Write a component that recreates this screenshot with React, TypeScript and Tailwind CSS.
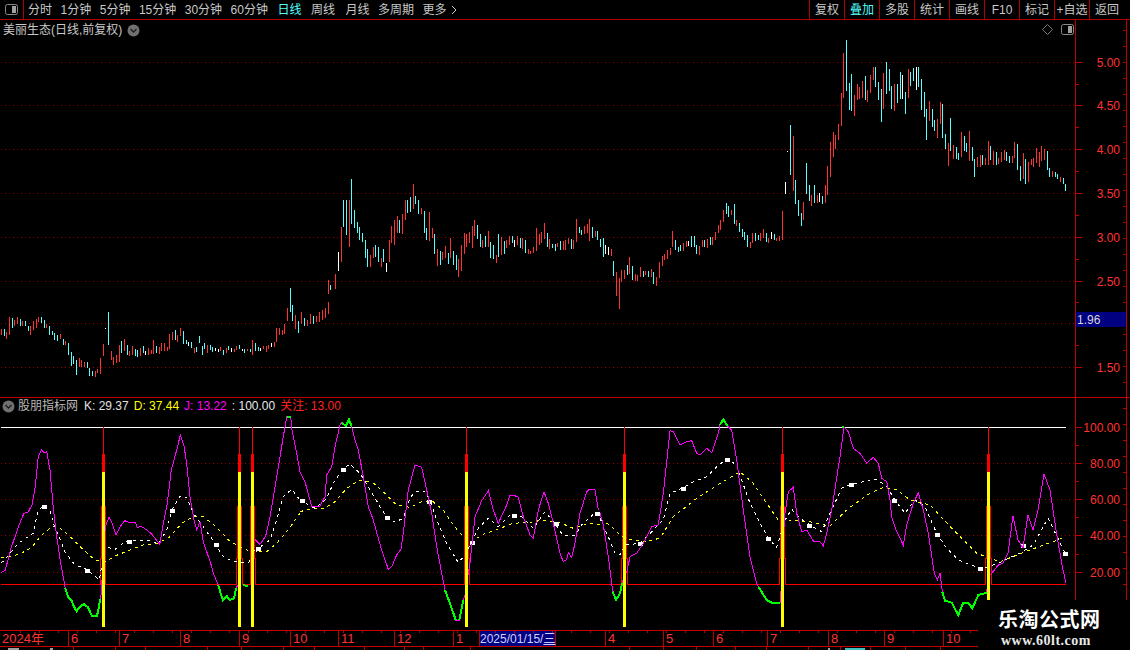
const RED_LINE = "#c00000";

// candles read off the chart: "x,top,bottom,colour", in 3x crop units
const candleGroups: [number, number, string][] = [
  [0, 270, "4,178,196,r 13,178,198,c 19,186,206,r 28,142,194,r 37,144,174,c 43,150,168,r 52,142,162,r 61,148,168,c 67,154,168,r 76,154,168,c 85,168,184,c 91,168,194,r 100,154,180,r 109,148,174,r 115,142,156,r 124,142,160,c 133,150,174,c 139,162,174,r 148,168,194,c 157,184,194,c 163,190,210,c 172,196,212,c 181,192,208,r 190,208,226,c 196,214,226,r 205,220,254,c 214,246,288,c 220,258,282,c 229,270,314,c 238,264,290,r 244,270,292,r 253,276,290,r 262,276,294,c 268,294,318,c 277,304,318,c 286,304,320,r 292,296,310,r 301,264,312,r 310,222,258,r 316,174,177,w 325,126,224,c 334,244,270,r 340,262,286,r 349,256,278,r 358,224,276,r 364,214,250,c 373,208,244,r 382,226,254,c 388,244,258,r 397,228,256,r 406,238,258,c 412,240,260,c 421,234,258,r 430,228,250,c 436,244,254,w 445,234,254,r 454,240,252,r 460,210,252,r 469,228,250,c 478,232,252,r 484,220,244,r 493,218,244,r 502,232,244,r 508,192,238,r 517,186,210,r 526,180,210,c 532,196,216,r 541,174,198,r 550,184,222,c 559,210,222,c 565,216,228,w 574,216,234,c 583,234,248,r 589,232,246,c 598,198,218,c 607,228,254,c 613,220,238,c 622,224,248,r 631,226,240,c 637,232,246,c 646,234,244,w 655,238,246,w 661,232,244,r 670,240,254,c 679,234,250,r 685,228,240,c 694,234,246,w 703,236,246,r 709,228,240,r 718,226,236,c 727,238,242,w 733,238,248,c 742,238,244,r 751,238,246,c 757,210,254,r 766,220,242,c 775,232,244,c 781,234,242,w 790,228,238,r 799,228,246,r 805,226,238,r 814,220,232,w 823,216,232,r 829,174,216,r 838,174,196,r 847,180,196,r 853,162,192,r 862,114,152,r 871,54,126,c 877,106,152,c 886,136,176,r 895,154,188,c"],
  [300, 300, "4,36,72,r 13,54,78,c 22,60,78,r 31,42,72,r 40,48,72,c 49,48,66,r 58,36,66,r 67,30,60,r 76,24,54,r 85,6,42,r"],
  [300, 170, "85,330,372,r 91,345,360,c 106,312,356,r 115,246,302,w 124,170,276,r 130,90,170,c 139,90,194,c 148,90,230,r 154,27,162,c 163,120,174,c 172,156,190,c 178,172,210,c 187,190,216,c 196,210,264,c 202,236,290,c 211,256,290,r 220,232,264,r 226,226,262,c 235,232,276,c 244,264,290,r 250,236,276,c 259,278,306,w 268,210,276,r 274,168,218,r 283,150,224,r 292,138,190,r 298,150,188,c 307,132,192,r 316,90,150,r 322,90,128,c 331,82,126,c 340,42,118,r 346,78,102,c 355,90,132,c 364,114,132,r 373,124,188,c 379,174,210,c 388,126,212,r 397,174,204,r 403,192,252,c 412,236,288,r 421,242,286,c 427,246,270,r 436,228,264,r 445,250,282,c 451,204,264,r 460,242,286,c 469,256,300,c 475,266,320,r 484,224,302,r 493,188,252,r 499,192,232,r 508,186,220,r 517,168,234,r 523,150,198,r 532,166,208,c 541,192,232,c 547,210,234,r 556,198,230,c 565,182,232,r 571,216,264,c 580,224,268,c 589,254,278,r 595,192,262,c 604,200,256,r 613,214,252,c 619,210,234,r 628,198,226,r 637,198,218,c 643,210,232,w 652,198,226,r 661,204,234,c 667,204,236,r 676,210,248,c 685,236,252,r 691,242,252,r 700,230,248,r 709,174,242,r 718,192,226,r"],
  [540, 195, "4,111,144,r 13,84,132,r 22,114,156,c 28,132,162,r 37,147,159,c 46,147,168,c 52,145,156,r 61,138,165,c 70,138,165,r 76,135,165,r 85,129,148,r 94,132,162,c 100,135,162,r 109,72,141,r 118,96,114,c 124,105,120,c 133,93,117,r 142,87,114,r 148,72,138,r 157,96,129,c 166,108,126,r 172,108,135,c 181,132,156,c 190,129,186,c 196,150,178,w 205,156,180,w 214,162,183,r 220,198,243,c 229,232,303,r 238,250,342,r 244,225,261,r 253,225,252,r 262,210,240,c 268,186,237,r 277,213,255,c 286,237,258,r 292,240,258,r 301,216,246,r 310,228,246,c 316,228,240,r 325,228,246,c 334,222,246,r 340,231,267,c 349,246,273,r 358,201,249,r 367,183,213,r 373,177,195,r 382,165,192,r 391,159,180,r 397,108,156,r 406,135,165,c 415,156,171,c 421,150,168,c 430,144,168,r 439,138,156,r 445,138,153,w 454,123,156,c 463,123,156,c 469,150,177,c 478,153,180,r 487,135,156,r 493,135,156,c 502,132,159,r 511,126,150,c 517,126,150,r 526,111,135,r 535,90,114,r 541,75,105,r 550,45,81,r 559,24,57,c 565,33,66,c 574,45,60,r 583,27,87,c 589,75,93,r 598,84,111,c 607,102,126,c 613,111,135,c 622,120,156,c 631,141,159,r 637,114,144,r 646,114,138,c 655,120,135,c 661,114,138,r 670,102,129,r 679,114,141,c 685,129,144,r 694,111,132,w 703,117,135,c 709,129,138,r 718,123,138,r 727,48,135,r"],
  [780, 30, "7,544,600,r 16,456,492,w 22,363,366,w 31,285,434,c 40,318,484,r 46,450,522,c 55,510,558,c 64,548,588,c 70,516,570,r 79,400,492,c 88,465,512,c 94,495,528,r 103,465,520,c 112,495,520,r 118,490,516,w 127,498,522,c 136,465,520,r 142,408,494,r 151,336,440,r 160,306,380,r 166,316,358,r 175,282,330,r 184,190,288,r 190,70,204,r 199,30,182,c 208,160,240,c 214,132,242,c 223,195,258,r 232,162,210,r 238,172,206,r 247,152,204,r 256,138,210,c 262,180,216,r 271,134,188,r 280,110,150,r 286,112,172,c 295,156,210,c 304,178,276,c 310,130,236,r 319,96,192,c 328,118,182,c 334,168,238,c 343,162,242,r 352,162,220,c 361,126,206,c 367,134,206,w 376,186,252,c 385,118,204,r 391,126,168,c 400,114,154,c 409,110,180,w 415,112,170,c 424,148,240,c 433,186,260,c 439,236,330,c 448,214,272,r 457,236,290,c 463,270,304,c 472,266,324,r 481,216,282,r 487,222,324,c 496,312,358,c 505,340,408,r 511,264,362,c 520,346,386,r 529,352,388,c 535,368,390,c 544,306,380,r 553,318,364,c 559,340,366,c 568,304,394,r 577,352,392,c 583,388,440,c 592,382,412,r 601,376,412,r 607,376,406,c 616,384,406,r 625,334,404,r 631,348,390,c 640,364,406,r 649,366,404,c 655,384,402,r 664,366,396,r 673,360,390,r 679,366,392,c 688,378,400,c 697,378,400,r 703,336,384,r 712,342,420,c 721,408,452,c 730,370,448,r 736,388,462,c 745,396,456,r 754,388,406,r 760,384,410,r 769,354,400,r 778,366,410,r 784,348,392,r 793,358,390,r 802,364,420,c 808,414,440,c 817,424,440,r 826,426,440,c 832,432,446,c 841,442,456,r 850,444,462,c 856,462,482,c"],
];

const candleColor: Record<string, string> = { r: "#ff3232", c: "#54ffff", w: "#ffffff" };

const candles = candleGroups.flatMap(([ox, oy, s]) =>
  s.split(" ").map((item) => {
    const [x, a, b, c] = item.split(",");
    return {
      x: ox + Math.floor(Number(x) / 3),
      y: oy + Number(a) / 3,
      h: (Number(b) - Number(a)) / 3,
      color: candleColor[c],
    };
  })
);

// converts a crop's points to page coordinates
const zp = (ox: number, s: string) =>
  s
    .trim()
    .split(/\s+/)
    .map((p) => {
      const [x, y] = p.split(",").map(Number);
      return `${(ox + x / 3).toFixed(1)},${(410 + y / 3).toFixed(1)}`;
    })
    .join(" ");

const magenta = [
  zp(0, "3,487 15,482 24,450 33,415 45,380 57,345 72,310 84,307 96,285 105,235 115,140 124,120 132,128 140,125 150,180 160,295 170,380 182,460 195,530 205,562 214,570 222,590 230,604 240,590 252,582 264,592 276,618 291,618 297,590 303,555 308,480 316,350 327,322 336,340 348,376 360,350 374,332 390,338 405,336 412,352 425,350 440,360 455,372 465,385 479,403 490,340 502,280 514,180 522,150 530,120 541,76 552,108 560,160 570,260 582,330 590,360 600,336 610,395 620,425 632,460 640,490 655,525 662,550 669,570 680,558 690,570 702,565 708,535 715,523"),
  zp(0, "765,388 780,403 797,378 810,320 830,200 850,80 860,20 872,20 876,60 890,130 900,185"),
  zp(300, "0,185 15,215 35,290 60,288 75,260 80,195 95,170 105,110 120,45 125,38 138,48 147,28 155,50 165,90 175,120 190,200 205,290 220,330 235,385 245,420 265,478 275,470 290,435 303,418 310,370 325,240 345,165 365,172 380,240 395,310 410,410 425,490 435,540 450,580 467,630 478,630 490,570 495,555 505,490 510,460 515,410 525,320 545,272 565,242 580,300 595,340 620,285 630,255 640,255 655,262 670,320 690,375 700,385 715,300 732,245 745,280 760,340 780,430 790,455 800,448 805,428 815,442 825,400 840,310 860,245 868,238 885,240 895,300"),
  zp(600, "0,310 10,345 25,440 38,545 48,570 60,550 66,520 73,500 82,480 90,440 110,430 130,400 155,350 175,345 190,250 210,62 220,65 240,105 260,95 275,92 290,130 300,135 320,115 335,128 355,70 360,45 370,28 382,48 395,60 410,150 430,300 450,440 470,520 475,530 500,570 520,580 540,580 545,520 547,420 555,310 565,245 580,232 590,310 605,365 620,360 640,393 660,395 670,408 680,370 695,300 720,140 732,50 745,65 760,115 780,130 800,160 820,142 835,160 845,205 860,215 870,270 875,320 890,365 910,405 920,345 940,280 955,248 970,300 985,370 1003,490 1012,510 1020,490 1027,545 1035,572 1055,578 1075,615 1090,578 1105,578 1117,595 1135,555 1160,548 1165,500 1175,490 1195,465 1209,459 1224,429 1239,318 1254,390 1269,414 1284,315 1299,360 1314,300 1332,192 1350,240 1368,360 1386,465 1398,519"),
];

const green = [
  zp(0, "195,533 205,562 214,570 222,590 230,604 240,590 252,582 264,592 276,618 291,618 297,590 300,568"),
  zp(0, "655,525 662,550 669,570 680,558 690,570 702,565 708,535"),
  zp(0, "730,526 745,528"),
  zp(0, "862,20 872,20"),
  zp(300, "125,38 138,48 147,28 155,50"),
  zp(300, "435,540 450,580 467,630"),
  zp(300, "478,630 490,570"),
  zp(600, "38,545 48,570 60,550 66,520"),
  zp(600, "360,45 370,28 382,48"),
  zp(600, "475,530 500,570 520,580 540,580"),
  zp(600, "726,50 732,50"),
  zp(600, "1027,545 1035,572 1055,578 1075,615 1090,578 1105,578 1117,595 1135,555 1160,548"),
];

const whiteLine = [
  zp(0, "3,458 15,450 30,430 55,400 85,380 100,370 112,310 130,285 150,300 160,340 175,375 195,425 225,465 260,478 280,495 298,510 316,410 345,418 370,400 388,392 420,390 450,390 475,402 500,360 515,300 540,258 560,262 580,310 610,350 645,400 670,440 700,455 745,458 775,415 810,390 830,330 850,260 875,238 900,270"),
  zp(300, "0,270 25,285 45,295 80,265 100,220 130,175 150,162 180,190 205,230 240,290 260,322 285,336 310,325 330,265 345,245 375,245 390,272 410,330 440,400 475,458 495,435 515,395 535,355 565,325 595,350 630,315 665,320 700,355 735,305 765,340 790,378 825,375 845,345 885,308"),
  zp(600, "0,325 25,380 45,430 60,435 75,405 120,400 160,360 190,330 210,250 250,233 280,215 320,200 350,170 380,147 410,165 425,210 450,280 480,340 505,385 530,412 555,330 575,298 600,325 630,345 665,365 690,310 725,235 755,222 830,208 860,230 885,270 915,310 945,270 975,290 1010,370 1040,415 1075,450 1140,475 1165,470 1195,460 1260,429 1300,405 1344,324 1395,429"),
];

const yellowLine = [
  zp(0, "3,442 30,440 60,432 95,412 125,375 155,350 175,350 205,375 245,415 285,450 320,455 340,440 390,420 430,405 475,400 510,380 545,340 580,320 610,320 650,352 690,395 740,420 800,425 830,400 860,365 900,310"),
  zp(300, "0,305 30,297 70,295 100,280 140,235 175,212 215,215 255,250 290,285 330,292 365,275 395,272 430,300 460,345 485,375 515,395 545,375 600,355 640,340 690,337 730,330 780,338 820,355 870,340 900,343"),
  zp(600, "0,330 30,345 60,375 90,388 130,395 180,385 220,320 290,265 360,220 420,185 460,220 500,280 535,330 570,330 630,335 690,348 740,300 800,255 850,232 890,240 930,270 990,285 1060,360 1130,430 1200,455 1290,420 1389,384"),
];

const markers = [
  [44, 506], [87, 570], [129, 541], [172, 510], [216, 544], [258, 548], [302, 500], [343, 469], [387, 517],
  [429, 501], [472, 542], [514, 515], [556, 523], [597, 513], [640, 543], [683, 488], [727, 459], [768, 538],
  [809, 525], [851, 484], [894, 500], [937, 534], [980, 568], [1023, 545], [1065, 553],
];

const signals = [
  { x: 103, bottom: 627 },
  { x: 239, bottom: 627 },
  { x: 252, bottom: 627 },
  { x: 466, bottom: 627 },
  { x: 624, bottom: 627 },
  { x: 782, bottom: 627 },
  { x: 988, bottom: 600 },
];

const redStep =
  "1,584.5 100.5,584.5 100.5,558 105.5,558 105.5,584.5 236.5,584.5 236.5,558 242.5,558 242.5,584.5 250.5,584.5 250.5,558 255.5,558 255.5,584.5 464.5,584.5 464.5,558 469.5,558 469.5,584.5 621.5,584.5 621.5,558 627.5,558 627.5,584.5 779.5,584.5 779.5,558 785.5,558 785.5,584.5 985.5,584.5 985.5,558 991.5,558 991.5,584.5 1065.5,584.5";

const priceTicks = [
  { y: 62, label: "5.00" },
  { y: 105, label: "4.50" },
  { y: 149, label: "4.00" },
  { y: 193, label: "3.50" },
  { y: 237, label: "3.00" },
  { y: 281, label: "2.50" },
  { y: 323, label: "" },
  { y: 367, label: "1.50" },
];

const indicatorTicks = [
  { y: 427, label: "100.00" },
  { y: 463, label: "80.00" },
  { y: 499, label: "60.00" },
  { y: 535, label: "40.00" },
  { y: 572, label: "20.00" },
];

const periods = ["分时", "1分钟", "5分钟", "15分钟", "30分钟", "60分钟"];
const tools = ["复权", "叠加", "多股", "统计", "画线", "F10", "标记", "+自选"];

const months = [
  { label: "2024年", w: "w-[68px]" },
  { label: "6", w: "w-[51px]" },
  { label: "7", w: "w-[61px]" },
  { label: "8", w: "w-[59px]" },
  { label: "9", w: "w-[51px]" },
  { label: "10", w: "w-[48px]" },
  { label: "11", w: "w-[56px]" },
  { label: "12", w: "w-[59px]" },
  { label: "1", w: "w-[26px]" },
];
const monthsAfter = [
  { label: "4", w: "w-[58px]" },
  { label: "5", w: "w-[50px]" },
  { label: "6", w: "w-[54px]" },
  { label: "7", w: "w-[61px]" },
  { label: "8", w: "w-[56px]" },
  { label: "9", w: "w-[59px]" },
  { label: "10", w: "w-[36px]" },
];

const dateTicks = Array.from({ length: 51 }, (_, i) => 20 + i * 19);
const lowerTicks = [73, 115, 145, 207, 241, 283, 314, 364, 404, 423, 470, 629, 663, 696, 735, 766, 808, 840, 870, 905, 940];

function Chevron() {
  return (
    <svg width="13" height="13" viewBox="0 0 13 13" className="shrink-0">
      <circle cx="6.5" cy="6.5" r="6" fill="#707070" />
      <path d="M3.5 5 6.5 8l3-3" fill="none" stroke="#1c1c1c" strokeWidth="1.3" />
    </svg>
  );
}

function PanelIcon() {
  return (
    <svg width="13" height="11" viewBox="0 0 13 11" className="shrink-0">
      <rect x="0.5" y="0.5" width="12" height="10" rx="2" fill="none" stroke="#8a8a8a" />
      <rect x="7" y="2" width="4" height="7" fill="#a0a0a0" />
    </svg>
  );
}

function Axis({ top, height, ticks }: { top: number; height: number; ticks: { y: number; label: string }[] }) {
  const minor = ticks.slice(1).map((t, i) => (t.y + ticks[i].y) / 2);
  const small: number[] = [];
  for (let y = top + 10; y < top + height; y += 16) small.push(y);
  return (
    <svg width="55" height={height} viewBox={`1075 ${top} 55 ${height}`} className="shrink-0" shapeRendering="crispEdges">
      <rect x="1075" y={top} width="1" height={height} fill={RED_LINE} />
      <rect x="1126" y={top} width="1" height={height} fill={RED_LINE} />
      {small.map((y) => (
        <rect key={y} x="1123" y={y} width="3" height="1" fill={RED_LINE} />
      ))}
      {minor.map((y) => (
        <rect key={y} x="1076" y={Math.round(y)} width="3" height="1" fill={RED_LINE} />
      ))}
      {ticks.map((t) => (
        <g key={t.y}>
          <rect x="1076" y={t.y} width="6" height="1" fill={RED_LINE} />
          {t.label && (
            <text x="1120" y={t.y + 4.5} textAnchor="end" className="text-xs" fill="#ff3232" shapeRendering="auto">
              {t.label}
            </text>
          )}
        </g>
      ))}
    </svg>
  );
}

function PriceChart() {
  return (
    <svg width="1075" height="377" viewBox="0 20 1075 377" className="shrink-0" shapeRendering="crispEdges">
      {priceTicks.map((t) => (
        <line key={t.y} x1="1" x2="1075" y1={t.y + 0.5} y2={t.y + 0.5} stroke="#8c0000" strokeDasharray="1 3" />
      ))}
      {candles.map((c, i) => (
        <rect key={i} x={c.x} y={c.y} width="1" height={c.h} fill={c.color} />
      ))}
    </svg>
  );
}

function IndicatorChart() {
  return (
    <svg width="1075" height="232" viewBox="0 398 1075 232" className="shrink-0" shapeRendering="crispEdges">
      {indicatorTicks.slice(1).map((t) => (
        <line key={t.y} x1="1" x2="1075" y1={t.y + 0.5} y2={t.y + 0.5} stroke="#8c0000" strokeDasharray="1 3" />
      ))}
      <line x1="1" x2="1066" y1="427.5" y2="427.5" stroke="#ffffff" />
      <polyline points={redStep} fill="none" stroke="#ff0000" />
      {signals.map((s) => (
        <g key={s.x}>
          <rect x={s.x} y="427" width="1" height="45" fill="#ff0000" />
          <rect x={s.x - 1} y="454" width="3" height="18" fill="#ff0000" />
          <rect x={s.x - 2} y="506" width="5" height="52" fill="#ff0000" />
        </g>
      ))}
      {yellowLine.map((p, i) => (
        <polyline key={i} points={p} fill="none" stroke="#ffff00" strokeDasharray="3 4" />
      ))}
      {whiteLine.map((p, i) => (
        <polyline key={i} points={p} fill="none" stroke="#ffffff" strokeDasharray="3 4" />
      ))}
      {markers.map(([x, y]) => (
        <rect key={x} x={x - 2} y={y - 1} width="5" height="4" fill="#ffffff" />
      ))}
      {magenta.map((p, i) => (
        <polyline key={i} points={p} fill="none" stroke="#ff00ff" />
      ))}
      {green.map((p, i) => (
        <polyline key={i} points={p} fill="none" stroke="#00ff00" strokeWidth="2" />
      ))}
      {signals.map((s) => (
        <rect key={s.x} x={s.x - 1} y="472" width="3" height={s.bottom - 472} fill="#ffff00" />
      ))}
    </svg>
  );
}

export default function App() {
  return (
    <div className="relative flex h-[650px] w-[1130px] flex-col overflow-hidden bg-black font-['Liberation_Sans','Noto_Sans_CJK_SC',sans-serif] text-xs text-[#c8c8c8]">
      {/* top toolbar */}
      <div className="flex h-5 shrink-0 items-center border-b border-[#b00000]">
        <div className="flex h-full w-6 shrink-0 items-center justify-center border-r border-[#b00000]">
          <PanelIcon />
        </div>
        <div className="ml-1 flex items-center gap-[8.5px]">
          {periods.map((p) => (
            <span key={p}>{p}</span>
          ))}
          <span className="ml-px text-[#54ffff]">日线</span>
          <span className="ml-px mr-0.5">周线</span>
          <span>月线</span>
          <span>多周期</span>
          <span className="flex items-center gap-1">
            更多
            <svg width="6" height="10" viewBox="0 0 6 10">
              <path d="M1 1l4 4-4 4" fill="none" stroke="#c8c8c8" />
            </svg>
          </span>
        </div>
        <div className="ml-auto flex h-full">
          {tools.map((t) => (
            <span
              key={t}
              className={`flex h-full w-[35px] items-center justify-center border-l border-[#b00000] ${t === "叠加" ? "text-[#54ffff]" : ""}`}
            >
              {t}
            </span>
          ))}
          <span className="flex h-full w-[41px] items-center justify-start border-l border-[#b00000] pl-[5px]">返回</span>
        </div>
      </div>

      {/* price pane */}
      <div className="relative flex h-[378px] shrink-0 border-b border-[#c00000]">
        <PriceChart />
        <Axis top={20} height={377} ticks={priceTicks} />
        <div className="absolute left-[3px] top-[2px] flex items-center gap-[5px] text-[#c8c8c8]">
          <span>美丽生态(日线,前复权)</span>
          <Chevron />
        </div>
        <div className="absolute left-[1042px] top-[4px] flex items-center gap-[8px]">
          <svg width="11" height="11" viewBox="0 0 11 11">
            <path d="M5.5.5l5 5-5 5-5-5z" fill="none" stroke="#777777" />
          </svg>
          <PanelIcon />
        </div>
        <span className="absolute left-[1076px] top-[292px] flex h-[15px] w-[50px] items-center bg-[#000080] pl-px text-[#d8d8d8]">1.96</span>
      </div>

      {/* indicator pane */}
      <div className="relative flex h-[232px] shrink-0">
        <IndicatorChart />
        <Axis top={398} height={202} ticks={indicatorTicks} />
        <div className="absolute left-[2px] top-0 flex items-center">
          <Chevron />
          <span className="ml-[3px] text-[#b8b8b8]">股朋指标网</span>
          <span className="ml-[6px] text-[#e0e0e0]">K: 29.37</span>
          <span className="ml-[5px] text-[#ffff00]">D: 37.44</span>
          <span className="ml-[5px] text-[#ff00ff]">J: 13.22</span>
          <span className="ml-[5px] text-[#e8e8e8]">: 100.00</span>
          <span className="ml-[5px] text-[#ff2020]">关注: 13.00</span>
        </div>
      </div>

      {/* date axis */}
      <div className="relative flex h-[17px] shrink-0 border-b border-t border-[#c00000] text-[13px] leading-[15px] text-[#ff3232]">
        {months.map((m, i) => (
          <span key={i} className={`${m.w} shrink-0 pl-0.5 ${i > 0 ? "border-l border-[#c00000]" : ""}`}>
            {m.label}
          </span>
        ))}
        <span className="w-[77px] shrink-0 whitespace-nowrap border-x border-[#c00000] bg-[#000080] text-center text-xs text-[#d0d0ff]">
          2025/01/15/<span className="underline">三</span>
        </span>
        <span className="w-[49px] shrink-0" />
        {monthsAfter.map((m, i) => (
          <span key={i} className={`${m.w} shrink-0 border-l border-[#c00000] pl-0.5`}>
            {m.label}
          </span>
        ))}
        <svg width="978" height="3" className="absolute left-0 top-0">
          {dateTicks.map((x) => (
            <rect key={x} x={x} y="0" width="1" height="2" fill={RED_LINE} />
          ))}
        </svg>
      </div>

      {/* second axis row, cut off by the window */}
      <svg width="1130" height="3" className="shrink-0" shapeRendering="crispEdges">
        {lowerTicks.map((x) => (
          <rect key={x} x={x} y="0" width="1" height="3" fill={RED_LINE} />
        ))}
        <rect x="8" y="1" width="11" height="2" fill="#a0a0a0" />
        <rect x="50" y="1" width="3" height="2" fill="#a0a0a0" />
        <rect x="828" y="1" width="2" height="2" fill="#a0a0a0" />
        <rect x="845" y="1" width="20" height="2" fill="#40c0c0" />
      </svg>

      {/* watermark */}
      <div className="absolute left-[978px] top-[600px] flex h-[50px] w-[152px] flex-col items-start bg-black pl-5 pt-[7px]">
        <span className="text-xl font-bold leading-[26px] tracking-[0.5px] text-white">乐淘公式网</span>
        <span className="ml-[3px] font-['Liberation_Serif',serif] text-sm font-bold leading-4 tracking-[0.5px] text-[#e8e8e8]">www.60lt.com</span>
      </div>
    </div>
  );
}
